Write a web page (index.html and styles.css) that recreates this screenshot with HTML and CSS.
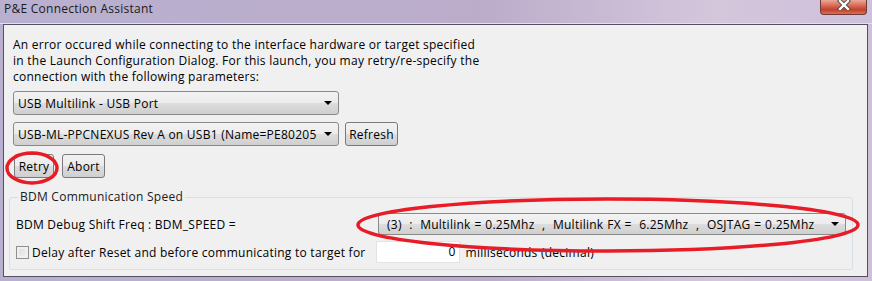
FILE: index.html
```html
<!DOCTYPE html>
<html lang="en">
<head>
    <meta charset="UTF-8">
    <title>P&amp;E Connection Assistant</title>
    <link rel="stylesheet" href="styles.css">
</head>
<body>

<div class="window">
    <!-- Title bar -->
    <div class="titlebar">
        <span class="title">P&amp;E Connection Assistant</span>
        <div class="close-btn">
            <svg width="14" height="10" viewBox="0 0 14 10">
                <path d="M3 1 L11 9 M11 1 L3 9" stroke="#4a4a4a" stroke-width="4.2" stroke-linecap="square" />
                <path d="M3 1 L11 9 M11 1 L3 9" stroke="#ffffff" stroke-width="2.4" stroke-linecap="square" />
            </svg>
        </div>
    </div>

    <div class="client">
        <div class="top-section">
            <p class="message">An error occured while connecting to the interface hardware or target specified<br>in the Launch Configuration Dialog. For this launch, you may retry/re-specify the<br>connection with the following parameters:</p>

            <div class="combo combo-wide">
                <span class="combo-text">USB Multilink - USB Port</span>
                <span class="arrow"></span>
            </div>

            <div class="row">
                <div class="combo combo-wide">
                    <span class="combo-text">USB-ML-PPCNEXUS Rev A on USB1 (Name=PE80205</span>
                    <span class="arrow"></span>
                </div>
                <button class="btn btn-refresh">Refresh</button>
            </div>

            <div class="row buttons-row">
                <button class="btn btn-retry">Retry</button>
                <button class="btn btn-abort">Abort</button>
            </div>
        </div>

        <!-- BDM group -->
        <fieldset class="group">
            <legend>BDM Communication Speed</legend>
            <div class="group-row speed-row">
                <span>BDM Debug Shift Freq : BDM_SPEED =</span>
                <div class="combo combo-speed">
                    <span class="combo-text">(3) &nbsp;:&nbsp; Multilink = 0.25Mhz &nbsp;, &nbsp;Multilink FX = &nbsp;6.25Mhz &nbsp;, &nbsp;OSJTAG = 0.25Mhz</span>
                    <span class="arrow"></span>
                </div>
            </div>
            <div class="group-row delay-row">
                <span class="checkbox"></span>
                <span class="delay-label">Delay after Reset and before communicating to target for</span>
                <div class="text-input">0</div>
                <span>milliseconds (decimal)</span>
            </div>
        </fieldset>
    </div>

    <!-- Red hand-drawn marks over the dialog -->
    <svg class="marks" width="872" height="281" viewBox="0 0 872 281">
        <ellipse cx="32" cy="168" rx="25" ry="15" />
        <ellipse cx="608" cy="225" rx="250" ry="26" />
    </svg>
</div>

</body>
</html>
```

FILE: styles.css
```css
/* Global */
body {
    margin: 0;
    padding: 0;
    font-family: 'Open Sans', 'Noto Sans', sans-serif;
    font-size: 12px;
    letter-spacing: 0.25px;
    color: #000;
    width: 872px;
    height: 281px;
    overflow: hidden;
}

.window {
    position: relative;
    width: 872px;
    height: 281px;
    background: linear-gradient(to right, #b9b0d0 0%, #bbacca 55%, #d4c7dc 82%, #cdc0da 100%);
}

/* Title bar */
.titlebar {
    height: 23px;
    display: flex;
    justify-content: space-between;
    align-items: flex-start;
    padding-left: 4px;
    padding-right: 5px;
    border-bottom: 1px solid #e6dff0;
}

.title {
    line-height: 18px;
    color: #1a1a1a;
}

.close-btn {
    width: 45px;
    height: 14px;
    border: 1px solid #6e3a36;
    border-top: none;
    border-radius: 0 0 4px 4px;
    background: linear-gradient(to bottom, #e9a898 0%, #d6634e 45%, #c2402b 70%, #d8705a 100%);
    display: flex;
    justify-content: center;
    align-items: flex-start;
}

.close-btn svg {
    display: block;
}

/* Client area */
.client {
    margin: 0 4px 0 3px;
    height: 253px;
    background-color: #f0f0f0;
    border: 1px solid #555060;
    box-sizing: border-box;
    display: flex;
    flex-direction: column;
}

.top-section {
    padding: 12px 0 0 9px;
}

.message {
    margin: 0;
    line-height: 16px;
}

.row {
    display: flex;
    gap: 6px;
    margin-top: 7px;
}

/* Combo boxes */
.combo {
    box-sizing: border-box;
    height: 24px;
    border: 1px solid #8a8a8a;
    border-radius: 3px;
    background: linear-gradient(to bottom, #f3f3f3 0%, #ebebeb 50%, #dddddd 51%, #cfcfcf 100%);
    display: flex;
    align-items: center;
    padding-left: 4px;
    padding-right: 6px;
    overflow: hidden;
}

.combo-wide {
    width: 326px;
    margin-top: 6px;
}

.row .combo-wide {
    margin-top: 0;
}

.combo-text {
    flex: 1;
    white-space: nowrap;
    overflow: hidden;
}

.arrow {
    width: 0;
    height: 0;
    border-left: 4px solid transparent;
    border-right: 4px solid transparent;
    border-top: 4px solid #000;
    margin-left: 4px;
}

/* Buttons */
.btn {
    font-family: inherit;
    font-size: 12px;
    letter-spacing: 0.25px;
    height: 24px;
    padding: 0 3px;
    border: 1px solid #7a7a7a;
    border-radius: 3px;
    background: linear-gradient(to bottom, #f2f2f2 0%, #ebebeb 50%, #dddddd 51%, #cfcfcf 100%);
    color: #000;
}

.btn-refresh {
    width: 53px;
}

.buttons-row {
    margin-top: 8px;
    gap: 8px;
}

.btn-retry {
    width: 40px;
    margin-left: 1px;
}

.btn-abort {
    width: 43px;
}

/* Group box */
.group {
    margin: 11px 14px 6px 5px;
    padding: 8px 6px 0 6px;
    border: 1px solid #d5dfe5;
    border-radius: 3px;
    flex: 1;
}

.group legend {
    padding: 0 2px;
    margin-left: 2px;
    line-height: 16px;
    color: #1a1a1a;
}

.group-row {
    display: flex;
    align-items: center;
}

.speed-row {
    justify-content: space-between;
}

.combo-speed {
    width: 468px;
    height: 22px;
    padding-left: 8px;
    word-spacing: 0.4px;
}

.delay-row {
    margin-top: 6px;
}

.checkbox {
    box-sizing: border-box;
    width: 13px;
    height: 13px;
    border: 1px solid #8e8f8f;
    background: linear-gradient(135deg, #dcdcdc 0%, #f4f4f4 100%);
    box-shadow: inset 0 0 0 2px #f0f0f0;
    margin-right: 3px;
}

.text-input {
    box-sizing: border-box;
    width: 84px;
    height: 22px;
    margin-left: 10px;
    margin-right: 6px;
    background: #fff;
    border: 1px solid #e3e3e3;
    text-align: right;
    line-height: 20px;
    padding-right: 3px;
}

/* Red marker ellipses */
.marks {
    position: absolute;
    left: 0;
    top: 0;
    pointer-events: none;
}

.marks ellipse {
    fill: none;
    stroke: #e81c27;
    stroke-width: 3.5;
}
```
